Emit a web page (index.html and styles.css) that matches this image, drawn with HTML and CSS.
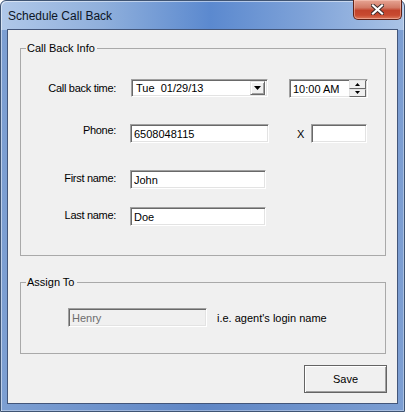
FILE: index.html
```html
<!DOCTYPE html>
<html lang="en">
<head>
    <meta charset="UTF-8">
    <title>Schedule Call Back</title>
    <link rel="stylesheet" href="styles.css">
</head>
<body>
    <div class="window">
        <div class="titlebar">
            <span class="title">Schedule Call Back</span>
            <button class="close">
                <svg width="13" height="11" viewBox="0 0 13 11">
                    <path d="M2 1.5 L11 9.5 M11 1.5 L2 9.5" stroke="#3a2a2a" stroke-width="4" stroke-linecap="square"/>
                    <path d="M2 1.5 L11 9.5 M11 1.5 L2 9.5" stroke="#ffffff" stroke-width="2.2" stroke-linecap="square"/>
                </svg>
            </button>
        </div>
        <div class="client">
            <div class="group info">
                <span class="caption">Call Back Info</span>
                <div class="row first">
                    <label>Call back time:</label>
                    <div class="field combo">
                        <span class="value">Tue&nbsp; 01/29/13</span>
                        <span class="drop">
                            <svg width="7" height="4" viewBox="0 0 7 4"><path d="M0 0 H7 L3.5 4 Z" fill="#000"/></svg>
                        </span>
                    </div>
                    <div class="field spin">
                        <span class="value">10:00 AM</span>
                        <span class="arrows">
                            <span class="arrow"><svg width="5" height="3" viewBox="0 0 5 3"><path d="M2.5 0 L5 3 H0 Z" fill="#000"/></svg></span>
                            <span class="arrow"><svg width="5" height="3" viewBox="0 0 5 3"><path d="M0 0 H5 L2.5 3 Z" fill="#000"/></svg></span>
                        </span>
                    </div>
                </div>
                <div class="row phone">
                    <label>Phone:</label>
                    <input class="field wide" type="text" value="6508048115">
                    <span class="ext-label">X</span>
                    <input class="field ext" type="text" value="">
                </div>
                <div class="row name">
                    <label>First name:</label>
                    <input class="field" type="text" value="John">
                </div>
                <div class="row last">
                    <label>Last name:</label>
                    <input class="field" type="text" value="Doe">
                </div>
            </div>

            <div class="group assign">
                <span class="caption">Assign To</span>
                <div class="agent">
                    <input class="field disabled" type="text" value="Henry" disabled>
                    <span class="hint">i.e. agent's login name</span>
                </div>
            </div>

            <div class="actions">
                <button class="save">Save</button>
            </div>
        </div>
    </div>
</body>
</html>
```

FILE: styles.css
```css
*{
    margin: 0;
    padding: 0;
    box-sizing: border-box;
}
body{
    font-family: "Liberation Sans", Arial, sans-serif;
    font-size: 11px;
    background-color: #ffffff;
}

.window{
    width: 405px;
    height: 412px;
    border: 1px solid #3f5473;
    border-radius: 6px 6px 0 0;
    padding: 0 6px 7px 6px;
    display: flex;
    flex-direction: column;
    background:
        linear-gradient(90deg, #b0c8e9 0%, #90b0dc 25%, #5b89cf 52%, #7ea2d8 75%, #aac3e6 100%) top / 100% 29px no-repeat,
        linear-gradient(90deg, #7d9fd2 0%, #5f86c5 50%, #7c9ed2 100%);
    box-shadow: inset 1px 1px 0 rgba(255, 255, 255, 0.5), inset -1px -1px 0 rgba(255, 255, 255, 0.35);
}

.titlebar{
    height: 28px;
    display: flex;
    align-items: flex-start;
    justify-content: space-between;
    flex-shrink: 0;
}
.title{
    font-size: 12px;
    color: #0c1526;
    padding: 8px 0 0 1px;
}
.close{
    width: 49px;
    height: 20px;
    margin: -1px -4px 0 0;
    border: 1px solid #5e2218;
    border-top: none;
    border-radius: 0 0 5px 5px;
    background: linear-gradient(180deg, #e6a594 0%, #d27a66 40%, #c2432b 55%, #c84a30 80%, #dc7a5c 100%);
    display: flex;
    align-items: center;
    justify-content: center;
    box-shadow: inset 0 0 0 1px rgba(255, 210, 200, 0.45);
}

.client{
    flex: 1;
    border: 1px solid #43567a;
    background-color: #f0f0f0;
    display: flex;
    flex-direction: column;
}

.group{
    position: relative;
    border: 1px solid #a9a9a9;
    margin: 0 11px 0 12px;
}
.caption{
    position: absolute;
    top: -7px;
    left: 5px;
    padding: 0 2px 0 1px;
    background-color: #f0f0f0;
    color: #000;
    line-height: 13px;
}
.info{
    margin-top: 18px;
    padding: 30px 0 29px 0;
}
.assign{
    margin-top: 26px;
    padding: 25px 0 26px 47px;
}

.row{
    display: flex;
    align-items: flex-start;
}
.row label{
    width: 95px;
    margin-right: 14px;
    text-align: right;
    letter-spacing: -0.3px;
    padding-top: 2px;
    line-height: 13px;
}
.row.first label{
    padding-top: 3px;
}
.row.phone{
    margin-top: 26px;
}
.row.phone label{
    padding-top: 0;
}
.row.name{
    margin-top: 27px;
}
.row.last{
    margin-top: 18px;
}

.field{
    height: 19px;
    width: 136px;
    font-family: inherit;
    font-size: 11px;
    color: #000;
    background-color: #ffffff;
    border: 1px solid;
    border-color: #a0a0a0 #ffffff #ffffff #a0a0a0;
    box-shadow: inset 1px 1px 0 #696969, inset -1px -1px 0 #e3e3e3;
    padding: 0 3px;
    outline: none;
}
.field.wide{
    width: 139px;
}
.field.ext{
    width: 56px;
}
.ext-label{
    margin: 4px 0 0 28px;
    width: 14px;
}

.combo{
    width: 137px;
    height: 18px;
    margin-left: 1px;
    display: flex;
    align-items: center;
    justify-content: space-between;
    padding: 0 2px 0 4px;
}
.drop{
    width: 15px;
    height: 14px;
    background-color: #f0f0f0;
    border: 1px solid;
    border-color: #e3e3e3 #696969 #696969 #e3e3e3;
    box-shadow: inset 1px 1px 0 #ffffff, inset -1px -1px 0 #a0a0a0;
    display: flex;
    align-items: center;
    justify-content: center;
}

.spin{
    width: 79px;
    margin-left: 21px;
    display: flex;
    align-items: center;
    justify-content: space-between;
    padding: 0 1px 0 3px;
}
.arrows{
    display: flex;
    flex-direction: column;
    width: 17px;
    height: 17px;
}
.arrow{
    flex: 1;
    background-color: #f0f0f0;
    border: 1px solid;
    border-color: #e3e3e3 #696969 #696969 #e3e3e3;
    display: flex;
    align-items: center;
    justify-content: center;
}

.agent{
    display: flex;
    align-items: center;
}
.field.disabled{
    width: 139px;
    background-color: #f0f0f0;
    color: #6d6d6d;
}
.hint{
    margin-left: 10px;
}

.actions{
    display: flex;
    justify-content: flex-end;
    margin: 11px 10px 0 0;
}
.save{
    width: 83px;
    height: 28px;
    font-family: inherit;
    font-size: 11px;
    color: #000;
    background-color: #f0f0f0;
    border: 1px solid #646464;
    box-shadow: inset 1px 1px 0 #ffffff, inset -1px -1px 0 #a0a0a0;
}
```
